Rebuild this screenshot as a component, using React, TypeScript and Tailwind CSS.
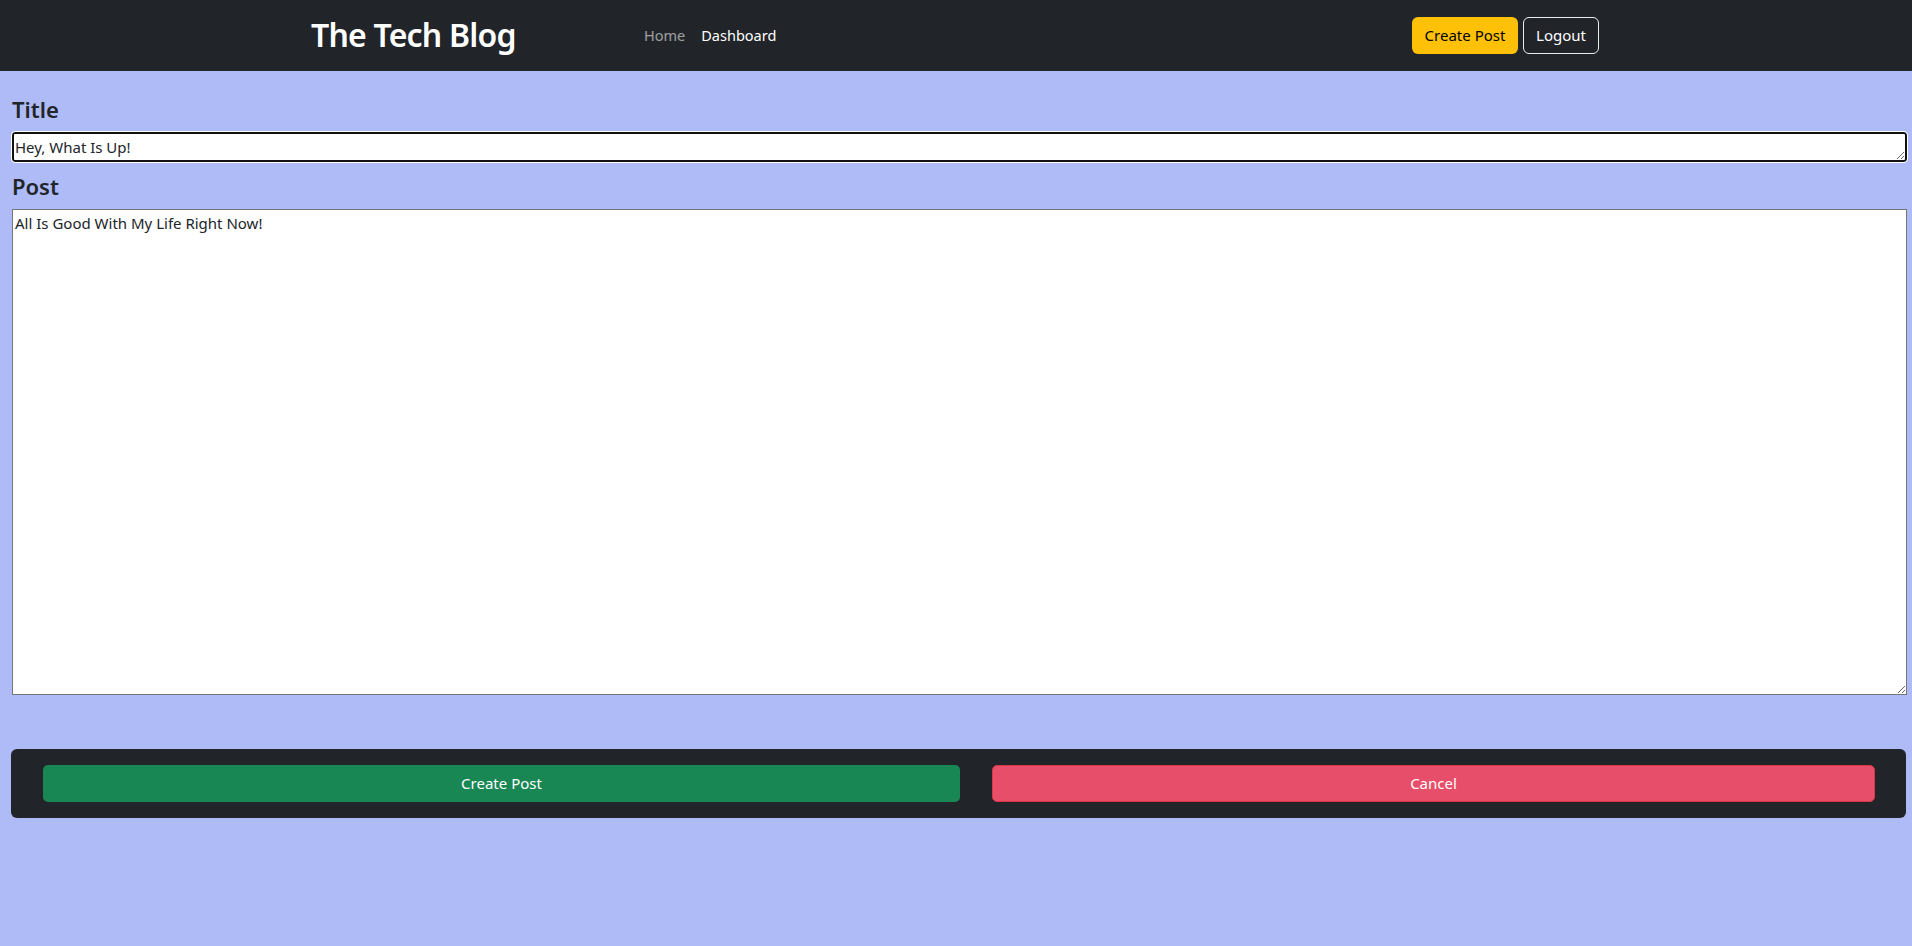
export default function App() {
  return (
    <div className="min-h-screen bg-[#afbbf7] font-['Noto_Sans',sans-serif] text-[#212529]">
      {/* Navbar */}
      <nav className="h-[71px] bg-[#212529] flex items-center">
        <div className="w-[1320px] mx-auto px-3 flex items-center">
          <div className="w-[336px] shrink-0">
            <span className="ml-[3px] text-[32px] font-semibold text-white leading-none tracking-[-0.8px]">The Tech Blog</span>
          </div>
          <div className="flex items-center gap-[16px] text-[14.5px]">
            <a className="text-white/55">Home</a>
            <a className="text-white">Dashboard</a>
          </div>
          <div className="ml-auto mr-[5px] flex items-center gap-[5px]">
            <button className="h-[37px] w-[106px] rounded-md bg-[#ffc107] text-[15px] text-black">Create Post</button>
            <button className="h-[37px] w-[76px] rounded-md border border-[#e9ecef] text-[15px] text-white">Logout</button>
          </div>
        </div>
      </nav>

      {/* Form */}
      <div className="px-[12px] pt-[25px]">
        <label className="block text-[22px] leading-[26px] font-semibold">Title</label>
        <textarea
          rows={1}
          defaultValue="Hey, What Is Up!"
          className="mt-[10px] block w-[1895px] h-[30px] border-2 border-[#111] rounded-[3px] outline outline-1 outline-white bg-white px-[1px] py-0 text-[15px] leading-[26px] resize-y"
        />
        <label className="mt-[11px] block text-[22px] leading-[26px] font-semibold">Post</label>
        <textarea
          defaultValue="All Is Good With My Life Right Now!"
          className="mt-[10px] block w-[1895px] h-[486px] border border-[#767676] bg-white px-[2px] py-[2px] text-[15px] leading-[22px] resize-y"
        />
      </div>

      {/* Actions */}
      <div className="mt-[54px] mx-[11px] w-[1895px] h-[69px] rounded-md bg-[#212529] flex items-center pl-[32px] gap-[32px]">
        <button className="h-[37px] w-[917px] rounded-[5px] bg-[#198754] text-[15px] text-white">Create Post</button>
        <button className="h-[37px] w-[883px] rounded-[5px] bg-[#e74e69] border border-[#dc3545] text-[15px] text-white">Cancel</button>
      </div>
    </div>
  );
}
